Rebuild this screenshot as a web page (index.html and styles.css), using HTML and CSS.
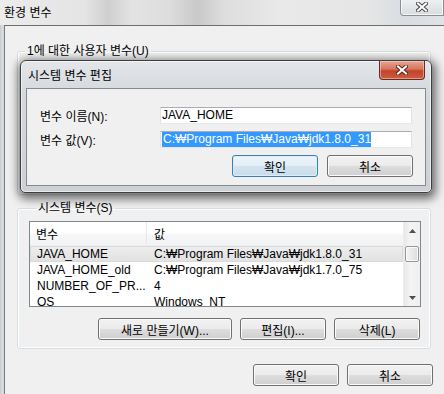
FILE: index.html
```html
<!DOCTYPE html>
<html lang="ko">
<head>
    <meta charset="UTF-8">
    <title>환경 변수</title>
    <link rel="stylesheet" href="styles.css">
</head>
<body>
    <div class="screen">
        <!-- Parent window: 환경 변수 -->
        <div class="window">
            <div class="titlebar">
                <span class="title">환경 변수</span>
                <div class="close-btn inactive">
                    <svg width="12" height="10" viewBox="0 0 12 10">
                        <path d="M2 1.5 L10 8.5 M10 1.5 L2 8.5" stroke="#4a4a4a" stroke-width="4" stroke-linecap="square"/>
                        <path d="M2 1.5 L10 8.5 M10 1.5 L2 8.5" stroke="#fff" stroke-width="2" stroke-linecap="square"/>
                    </svg>
                </div>
            </div>
            <div class="frame">
                <div class="client">
                    <fieldset class="group user-group">
                        <legend>1에 대한 사용자 변수(U)</legend>
                    </fieldset>

                    <fieldset class="group sys-group">
                        <legend>시스템 변수(S)</legend>
                        <div class="listview">
                            <div class="lv-content">
                                <div class="lv-row lv-header">
                                    <div class="cell">변수</div>
                                    <div class="cell">값</div>
                                </div>
                                <div class="lv-row selected">
                                    <div class="cell">JAVA_HOME</div>
                                    <div class="cell">C:₩Program Files₩Java₩jdk1.8.0_31</div>
                                </div>
                                <div class="lv-row">
                                    <div class="cell">JAVA_HOME_old</div>
                                    <div class="cell">C:₩Program Files₩Java₩jdk1.7.0_75</div>
                                </div>
                                <div class="lv-row">
                                    <div class="cell">NUMBER_OF_PR...</div>
                                    <div class="cell">4</div>
                                </div>
                                <div class="lv-row">
                                    <div class="cell">OS</div>
                                    <div class="cell">Windows_NT</div>
                                </div>
                            </div>
                            <div class="scrollbar">
                                <div class="sb-arrow">
                                    <svg width="7" height="4" viewBox="0 0 7 4"><path d="M0 4 L3.5 0 L7 4 Z" fill="#505050"/></svg>
                                </div>
                                <div class="sb-track">
                                    <div class="sb-thumb"></div>
                                </div>
                                <div class="sb-arrow">
                                    <svg width="7" height="4" viewBox="0 0 7 4"><path d="M0 0 L3.5 4 L7 0 Z" fill="#505050"/></svg>
                                </div>
                            </div>
                        </div>
                        <div class="button-row">
                            <button class="btn wide">새로 만들기(W)...</button>
                            <button class="btn">편집(I)...</button>
                            <button class="btn">삭제(L)</button>
                        </div>
                    </fieldset>

                    <div class="button-row dialog-buttons">
                        <button class="btn">확인</button>
                        <button class="btn">취소</button>
                    </div>
                </div>
            </div>
        </div>

        <!-- Modal: 시스템 변수 편집 -->
        <div class="modal">
            <div class="modal-titlebar">
                <span class="modal-title">시스템 변수 편집</span>
                <div class="close-btn active">
                    <svg width="12" height="10" viewBox="0 0 12 10">
                        <path d="M2 1.5 L10 8.5 M10 1.5 L2 8.5" stroke="#5a2a22" stroke-width="4" stroke-linecap="square"/>
                        <path d="M2 1.5 L10 8.5 M10 1.5 L2 8.5" stroke="#fff" stroke-width="2" stroke-linecap="square"/>
                    </svg>
                </div>
            </div>
            <div class="modal-client">
                <div class="field">
                    <label>변수 이름(N):</label>
                    <div class="textbox">JAVA_HOME</div>
                </div>
                <div class="field">
                    <label>변수 값(V):</label>
                    <div class="textbox"><span class="selection">C:₩Program Files₩Java₩jdk1.8.0_31</span></div>
                </div>
                <div class="button-row modal-buttons">
                    <button class="btn default">확인</button>
                    <button class="btn">취소</button>
                </div>
            </div>
        </div>
    </div>
</body>
</html>
```

FILE: styles.css
```css
* {
    box-sizing: border-box;
}
body {
    margin: 0;
    width: 444px;
    height: 394px;
    overflow: hidden;
    font-family: "Liberation Sans", "Noto Sans CJK KR", sans-serif;
    font-size: 12px;
    color: #000;
    background: #d2d5d9;
}
.screen {
    position: relative;
    width: 444px;
    height: 394px;
    overflow: hidden;
}

/* parent window */
.window {
    width: 470px;
    height: 420px;
    display: flex;
    flex-direction: column;
    background: linear-gradient(90deg, #c4c7cb 0px, #dcdfe2 2px, #cfd2d6 4px);
}
.titlebar {
    height: 25px;
    position: relative;
    display: flex;
    align-items: center;
    padding-left: 4px;
    background: linear-gradient(90deg, #ececec 0%, #e4e4e4 18%, #cfcfcf 23%, #e3e3e3 28%, #dddddd 36%, #c9c9c9 42%, #dedede 48%, #e9e9e9 60%, #e6e6e6 78%, #d9dde2 86%, #e4e6e9 100%);
}
.title {
    line-height: 14px;
    margin-top: 1px;
}
.frame {
    flex: 1;
    padding-left: 4px;
}
.client {
    height: 100%;
    background: #f0f0f0;
    border-top: 1px solid #6e6e6e;
    border-left: 1px solid #7c7c7c;
    padding: 18px 0 0 12px;
}

/* close buttons */
.close-btn {
    display: flex;
    align-items: center;
    justify-content: center;
}
.close-btn.inactive {
    position: absolute;
    top: -1px;
    left: 400px;
    width: 44px;
    height: 17px;
    border: 1px solid #8a8d92;
    border-top: none;
    border-radius: 0 0 0 4px;
    background: linear-gradient(#eef0f2, #d9dce0);
    box-shadow: inset 0 0 0 1px rgba(255, 255, 255, 0.7);
}
.close-btn.active {
    width: 46px;
    height: 19px;
    margin-right: 6px;
    border: 1px solid #6b2a20;
    border-top: none;
    border-radius: 0 0 4px 4px;
    background: linear-gradient(#e8a493 0%, #d6755f 45%, #c2432a 55%, #cc5d3f 100%);
    box-shadow: inset 0 0 0 1px rgba(255, 220, 210, 0.5);
}

/* group boxes */
.group {
    width: 414px;
    margin: 0;
    padding: 0;
    border: 1px solid #d5dfe5;
    border-radius: 3px;
    box-shadow: inset 0 0 0 1px #fff;
}
.group legend {
    margin-left: 7px;
    padding: 0 2px;
    line-height: 14px;
}
.user-group {
    height: 151px;
}
.sys-group {
    height: 148px;
    margin-top: 6px;
    padding: 6px 9px 0 11px;
}

/* list view */
.listview {
    display: flex;
    height: 86px;
    background: #fff;
    border: 1px solid #828790;
    overflow: hidden;
}
.lv-content {
    flex: 1;
    overflow: hidden;
}
.lv-row {
    display: grid;
    grid-template-columns: 117px 1fr;
    height: 16px;
    line-height: 16px;
}
.cell {
    padding-left: 7px;
    white-space: nowrap;
    overflow: hidden;
}
.lv-header {
    height: 24px;
    line-height: 22px;
    padding-top: 2px;
    background: linear-gradient(#ffffff 0%, #ffffff 45%, #f6f7f8 55%, #f1f2f4 100%);
    border-bottom: 1px solid #eef0f2;
}
.lv-header .cell:first-child {
    border-right: 1px solid #e3e8ee;
    padding-left: 6px;
    margin-top: -2px;
    padding-top: 2px;
}
.lv-row .cell:first-child {
    padding-right: 2px;
}
.lv-row.selected {
    background: linear-gradient(#eeeeee, #e1e1e1);
    box-shadow: inset 0 0 0 1px #dadada;
}

/* scroll bar */
.scrollbar {
    width: 17px;
    display: flex;
    flex-direction: column;
    background: linear-gradient(90deg, #e8e8e8, #f4f4f4 40%, #f0f0f0);
    border-left: 1px solid #ececec;
}
.sb-arrow {
    height: 17px;
    display: flex;
    align-items: center;
    justify-content: center;
}
.sb-track {
    flex: 1;
    padding-top: 7px;
}
.sb-thumb {
    height: 16px;
    margin: 0 1px;
    border: 1px solid #979797;
    border-radius: 2px;
    background: linear-gradient(90deg, #f4f4f4, #e9e9e9 50%, #dcdcdc);
    box-shadow: inset 0 0 0 1px #fafafa;
}

/* buttons */
.button-row {
    display: flex;
    justify-content: flex-end;
    gap: 8px;
}
.sys-group .button-row {
    margin-top: 11px;
    margin-right: 1px;
}
.btn {
    width: 86px;
    height: 22px;
    padding: 0;
    font-family: "Liberation Sans", "Noto Sans CJK KR", sans-serif;
    font-size: 12px;
    color: #000;
    border: 1px solid #707070;
    border-radius: 3px;
    background: linear-gradient(#f2f2f2 0%, #ebebeb 48%, #dddddd 52%, #cfcfcf 100%);
    box-shadow: inset 0 0 0 1px #fbfbfb;
}
.btn.wide {
    width: 134px;
}
.btn.default {
    border-color: #3c7fb1;
    background: linear-gradient(#eef5fa 0%, #e3eef6 48%, #d3e4f0 52%, #c8dcea 100%);
    box-shadow: inset 0 0 0 1px #dcecf8;
}
.dialog-buttons {
    width: 416px;
    margin-top: 15px;
}

/* modal dialog */
.modal {
    position: absolute;
    left: 20px;
    top: 60px;
    width: 412px;
    height: 133px;
    display: flex;
    flex-direction: column;
    border: 1px solid #3e3e3e;
    border-radius: 6px 6px 5px 5px;
    background: linear-gradient(#e3e6ea 0%, #d5d9de 25%, #cdd1d6 100%);
    box-shadow: inset 0 0 0 1px rgba(255, 255, 255, 0.55), 1px 3px 10px 3px rgba(0, 0, 0, 0.55);
}
.modal-titlebar {
    height: 27px;
    display: flex;
    justify-content: space-between;
    align-items: flex-start;
    padding-left: 7px;
}
.modal-title {
    margin-top: 8px;
    line-height: 14px;
}
.modal-client {
    flex: 1;
    margin: 0 5px 6px 5px;
    background: #f0f0f0;
    border: 1px solid #858a90;
    padding: 18px 12px 0 13px;
}
.field {
    display: flex;
    align-items: center;
    margin-bottom: 7px;
}
.field label {
    width: 120px;
}
.textbox {
    width: 252px;
    height: 17px;
    line-height: 15px;
    padding: 0 1px;
    background: #fff;
    border: 1px solid #e2e3ea;
    border-top-color: #abadb3;
    border-bottom-color: #e3e9ef;
    white-space: nowrap;
    overflow: hidden;
}
.selection {
    display: inline-block;
    background: #3399ff;
    color: #fff;
    padding-left: 1px;
}
.modal-buttons {
    margin-top: 2px;
    gap: 9px;
}
```
